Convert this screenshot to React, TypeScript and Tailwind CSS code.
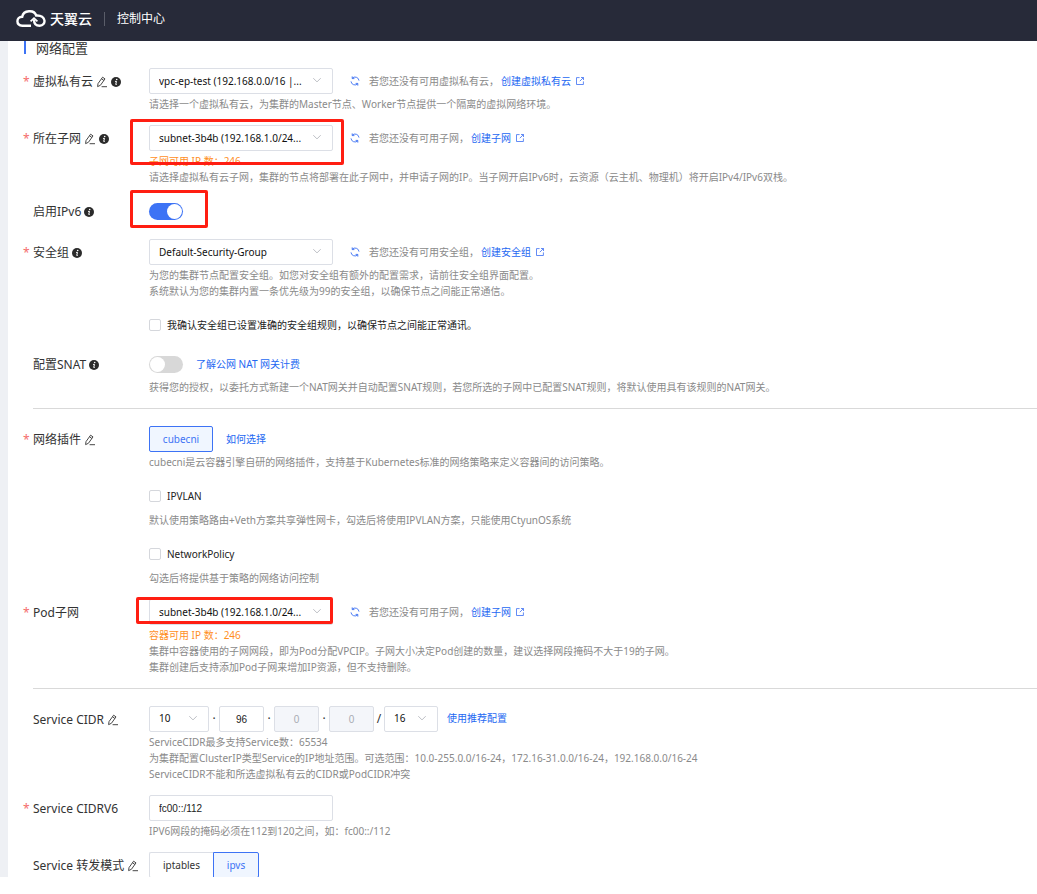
import type { ReactNode } from 'react';

function EditIcon() {
  return (
    <svg className="h-3 w-3 shrink-0" viewBox="0 0 12 12" fill="none" stroke="#333" strokeWidth="0.9">
      <path d="M1.6 10.6 2 7.6 6.6 1.2 9 2.9 4.4 9.3Z" strokeLinejoin="round" />
      <path d="M5.6 2.8 7.9 4.5M5.6 10.7H11" />
    </svg>
  );
}

function InfoIcon() {
  return (
    <svg className="h-2.5 w-2.5 shrink-0" viewBox="0 0 10 10">
      <circle cx="5" cy="5" r="5" fill="#2b2b2b" />
      <circle cx="5.7" cy="2.5" r="0.8" fill="#fff" />
      <path d="M4 4.4H5.5L4.7 7.4H5.8" fill="none" stroke="#fff" strokeWidth="1" />
    </svg>
  );
}

function RefreshIcon() {
  return (
    <svg className="h-2.5 w-2.5" viewBox="0 0 10 10" fill="none" stroke="#3b6ff2" strokeWidth="0.9">
      <path d="M2.2 2.2A4 4 0 0 1 9 4.6M7.8 7.8A4 4 0 0 1 1 5.4" />
      <path d="M2.2 0.4V2.6H4.4M7.8 9.6V7.4H5.6" />
    </svg>
  );
}

function ExternalIcon() {
  return (
    <svg className="h-2 w-2" viewBox="0 0 8 8" fill="none" stroke="#3b6ff2" strokeWidth="0.8">
      <path d="M3.6 0.6H0.5V7.5H7.4V4.4M5 0.5H7.5V3M7.4 0.6 3.8 4.2" />
    </svg>
  );
}

function Chevron() {
  return (
    <svg className="pointer-events-none absolute right-3 top-2 h-2 w-2" viewBox="0 0 8 8" fill="none" stroke="#b4b7bd" strokeWidth="0.9">
      <path d="M0.3 2.2 4 5.9 7.7 2.2" />
    </svg>
  );
}

type RowProps = {
  label: string;
  htmlFor?: string;
  required?: boolean;
  edit?: boolean;
  info?: boolean;
  children: ReactNode;
};

function Row({ label, htmlFor, required, edit, info, children }: RowProps) {
  const Label = htmlFor ? 'label' : 'span';
  return (
    <div className="grid grid-cols-[126px_1fr]">
      <div className="flex h-7 items-center gap-[3px] whitespace-nowrap text-xs">
        <Label htmlFor={htmlFor} className="flex">
          <span className="w-2.5 shrink-0 text-[#f56c6c]">{required ? '*' : ''}</span>
          {label}
        </Label>
        {edit && <EditIcon />}
        {info && <InfoIcon />}
      </div>
      <div className="relative">{children}</div>
    </div>
  );
}

function Select({ id, value, width, label }: { id: string; value: string; width: string; label?: string }) {
  return (
    <div className={`relative ${width}`}>
      <select
        id={id}
        aria-label={label}
        className="block h-[26px] w-full appearance-none rounded-xs border border-[#dcdfe6] bg-white pl-[9px] text-[10px] text-[#111]"
      >
        <option>{value}</option>
      </select>
      <Chevron />
    </div>
  );
}

function Hint({ children }: { children: ReactNode }) {
  return <div className="mt-0.5 text-[10px] leading-4 text-[#8a8a8a]">{children}</div>;
}

function CreateTip({ text, link }: { text: string; link: string }) {
  return (
    <div className="flex items-center text-[10px] text-[#8a8a8a]">
      <button type="button" aria-label="刷新" className="mr-[9px]">
        <RefreshIcon />
      </button>
      {text}
      <a href="#" className="ml-0.5 flex items-center gap-[5px] text-[#2468f2]">
        {link}
        <ExternalIcon />
      </a>
    </div>
  );
}

function Toggle({ id, on }: { id: string; on?: boolean }) {
  return (
    <input
      id={id}
      type="checkbox"
      role="switch"
      defaultChecked={on}
      className="relative h-[17px] w-[34px] appearance-none rounded-full bg-[#d8d8d8] before:absolute before:left-px before:top-px before:h-[15px] before:w-[15px] before:rounded-full before:bg-white checked:bg-[#3d73f5] checked:before:left-[18px]"
    />
  );
}

function Check({ label }: { label: string }) {
  return (
    <label className="mt-[18px] flex h-4 items-center gap-1.5 text-[10px] text-[#222]">
      <input type="checkbox" className="h-3 w-3 appearance-none rounded-xs border border-[#d5d7dc] bg-white" />
      {label}
    </label>
  );
}

function Octet({ value, label, disabled }: { value: string; label: string; disabled?: boolean }) {
  return (
    <input
      aria-label={label}
      defaultValue={value}
      disabled={disabled}
      className="h-[26px] w-[45px] rounded-xs border border-[#dcdfe6] bg-white text-center font-['Liberation_Sans',sans-serif] text-[10px] text-[#222] disabled:bg-[#f4f6fa] disabled:text-[#a8abb2]"
    />
  );
}

export default function App() {
  return (
    <div className="flex h-screen flex-col overflow-hidden bg-white font-['Noto_Sans','Noto_Sans_CJK_SC',sans-serif] text-[#333]">
      <header className="flex h-[41px] shrink-0 items-center bg-[#272a39] pb-1 pl-4 text-white">
        <svg className="h-[18px] w-[30px]" viewBox="0 0 30 18" fill="none" stroke="#fff" strokeWidth="2.4">
          <path d="M15 15.8H6.4C-0.4 15.2 0 7 6.2 6.8 7.4-0.2 18.4-0.6 20.2 5.6 30.6 4.8 30.6 15.8 23.6 15.8 19.2 15.8 18 13 18 9.4" />
          <path d="M14.6 11.4 18 8.2 21.4 11.4" strokeWidth="1.8" />
        </svg>
        <span className="ml-1 text-sm font-medium">天翼云</span>
        <span className="mx-3 h-3.5 w-px bg-[#5a5d69]" />
        <span className="text-xs">控制中心</span>
      </header>

      <main className="min-h-0 flex-1 bg-[#eef0f4] pl-2">
        <div className="min-h-full bg-white pl-[15px]">
          <h2 className="mb-3 ml-px flex items-center text-[13px] leading-[15px]">
            <span className="mr-2.5 h-[13px] w-0.5 self-start bg-[#3d73f5]" />
            网络配置
          </h2>

          <form className="flex flex-col gap-[13px]">
            <Row label="虚拟私有云" htmlFor="vpc" required edit info>
              <div className="flex gap-[17px]">
                <Select id="vpc" value="vpc-ep-test (192.168.0.0/16 |..." width="w-[184px]" />
                <CreateTip text="若您还没有可用虚拟私有云，" link="创建虚拟私有云" />
              </div>
              <Hint>请选择一个虚拟私有云，为集群的Master节点、Worker节点提供一个隔离的虚拟网络环境。</Hint>
            </Row>

            <Row label="所在子网" htmlFor="subnet" required edit info>
              <div className="flex gap-[17px]">
                <Select id="subnet" value="subnet-3b4b (192.168.1.0/24..." width="w-[184px]" />
                <CreateTip text="若您还没有可用子网，" link="创建子网" />
              </div>
              <Hint>
                <p className="text-[#ff8f1f]">子网可用 IP 数：246</p>
                <p>请选择虚拟私有云子网，集群的节点将部署在此子网中，并申请子网的IP。当子网开启IPv6时，云资源（云主机、物理机）将开启IPv4/IPv6双栈。</p>
              </Hint>
              <div className="pointer-events-none absolute -left-[19px] -top-[6px] h-[46px] w-[214px] rounded-xs border-3 border-[#ff1e12]" />
            </Row>

            <Row label="启用IPv6" htmlFor="ipv6" info>
              <div className="flex h-[26px] items-center">
                <Toggle id="ipv6" on />
              </div>
              <div className="pointer-events-none absolute -left-[19px] -top-2 h-[38px] w-[78px] rounded-xs border-3 border-[#ff1e12]" />
            </Row>

            <Row label="安全组" htmlFor="group" required info>
              <div className="flex gap-[17px]">
                <Select id="group" value="Default-Security-Group" width="w-[184px]" />
                <CreateTip text="若您还没有可用安全组，" link="创建安全组" />
              </div>
              <Hint>
                <p>为您的集群节点配置安全组。如您对安全组有额外的配置需求，请前往安全组界面配置。</p>
                <p>系统默认为您的集群内置一条优先级为99的安全组，以确保节点之间能正常通信。</p>
              </Hint>
              <Check label="我确认安全组已设置准确的安全组规则，以确保节点之间能正常通讯。" />
            </Row>

            <div className="mt-[5px]">
              <Row label="配置SNAT" htmlFor="snat" info>
                <div className="flex h-[26px] items-center gap-[13px]">
                  <Toggle id="snat" />
                  <a href="#" className="text-[10px] text-[#2468f2]">了解公网 NAT 网关计费</a>
                </div>
                <Hint>获得您的授权，以委托方式新建一个NAT网关并自动配置SNAT规则，若您所选的子网中已配置SNAT规则，将默认使用具有该规则的NAT网关。</Hint>
              </Row>
            </div>

            <hr className="mb-1 ml-2.5 border-[#d9d9d9]" />

            <Row label="网络插件" required edit>
              <div className="flex h-[26px] items-center gap-[13px]">
                <button type="button" className="h-[26px] w-16 rounded-xs border border-[#3d73f5] bg-[#f0f6ff] text-[10px] text-[#3d73f5]">
                  cubecni
                </button>
                <a href="#" className="text-[10px] text-[#2468f2]">如何选择</a>
              </div>
              <Hint>cubecni是云容器引擎自研的网络插件，支持基于Kubernetes标准的网络策略来定义容器间的访问策略。</Hint>
              <Check label="IPVLAN" />
              <div className="mt-2">
                <Hint>默认使用策略路由+Veth方案共享弹性网卡，勾选后将使用IPVLAN方案，只能使用CtyunOS系统</Hint>
              </div>
              <Check label="NetworkPolicy" />
              <div className="mt-2">
                <Hint>勾选后将提供基于策略的网络访问控制</Hint>
              </div>
            </Row>

            <Row label="Pod子网" htmlFor="pod" required>
              <div className="flex gap-[17px]">
                <Select id="pod" value="subnet-3b4b (192.168.1.0/24..." width="w-[184px]" />
                <CreateTip text="若您还没有可用子网，" link="创建子网" />
              </div>
              <Hint>
                <p className="text-[#ff8f1f]">容器可用 IP 数：246</p>
                <p>集群中容器使用的子网网段，即为Pod分配VPCIP。子网大小决定Pod创建的数量，建议选择网段掩码不大于19的子网。</p>
                <p>集群创建后支持添加Pod子网来增加IP资源，但不支持删除。</p>
              </Hint>
              <div className="pointer-events-none absolute -left-[13px] -top-0.5 h-[27px] w-[197px] rounded-xs border-3 border-[#ff1e12]" />
            </Row>

            <hr className="mb-1 ml-2.5 border-[#d9d9d9]" />

            <Row label="Service CIDR" htmlFor="cidr" edit>
              <div className="flex items-center text-xs">
                <Select id="cidr" value="10" width="w-[60px]" />
                <span className="w-2.5 text-center">·</span>
                <Octet value="96" label="第二段" />
                <span className="w-2.5 text-center">·</span>
                <Octet value="0" label="第三段" disabled />
                <span className="w-2.5 text-center">·</span>
                <Octet value="0" label="第四段" disabled />
                <span className="w-2.5 text-center">/</span>
                <Select id="mask" value="16" width="w-[54px]" label="掩码" />
                <a href="#" className="ml-[9px] text-[10px] text-[#2468f2]">使用推荐配置</a>
              </div>
              <Hint>
                <p>ServiceCIDR最多支持Service数：65534</p>
                <p>为集群配置ClusterIP类型Service的IP地址范围。可选范围：10.0-255.0.0/16-24，172.16-31.0.0/16-24，192.168.0.0/16-24</p>
                <p>ServiceCIDR不能和所选虚拟私有云的CIDR或PodCIDR冲突</p>
              </Hint>
            </Row>

            <Row label="Service CIDRV6" htmlFor="cidrv6" required>
              <input
                id="cidrv6"
                defaultValue="fc00::/112"
                className="block h-[26px] w-[184px] rounded-xs border border-[#dcdfe6] bg-white pl-[9px] font-['Liberation_Sans',sans-serif] text-[10px] text-[#222]"
              />
              <Hint>IPV6网段的掩码必须在112到120之间，如：fc00::/112</Hint>
            </Row>

            <Row label="Service 转发模式" edit>
              <div className="flex text-[10px]">
                <button type="button" className="h-[26px] w-16 rounded-l-xs border border-r-0 border-[#dcdfe6] bg-white">
                  iptables
                </button>
                <button type="button" className="h-[26px] w-[46px] rounded-r-xs border border-[#3d73f5] bg-[#f0f6ff] text-[#3d73f5]">
                  ipvs
                </button>
              </div>
            </Row>
          </form>
        </div>
      </main>

      <footer className="relative h-[17px] shrink-0 bg-white" />
    </div>
  );
}
